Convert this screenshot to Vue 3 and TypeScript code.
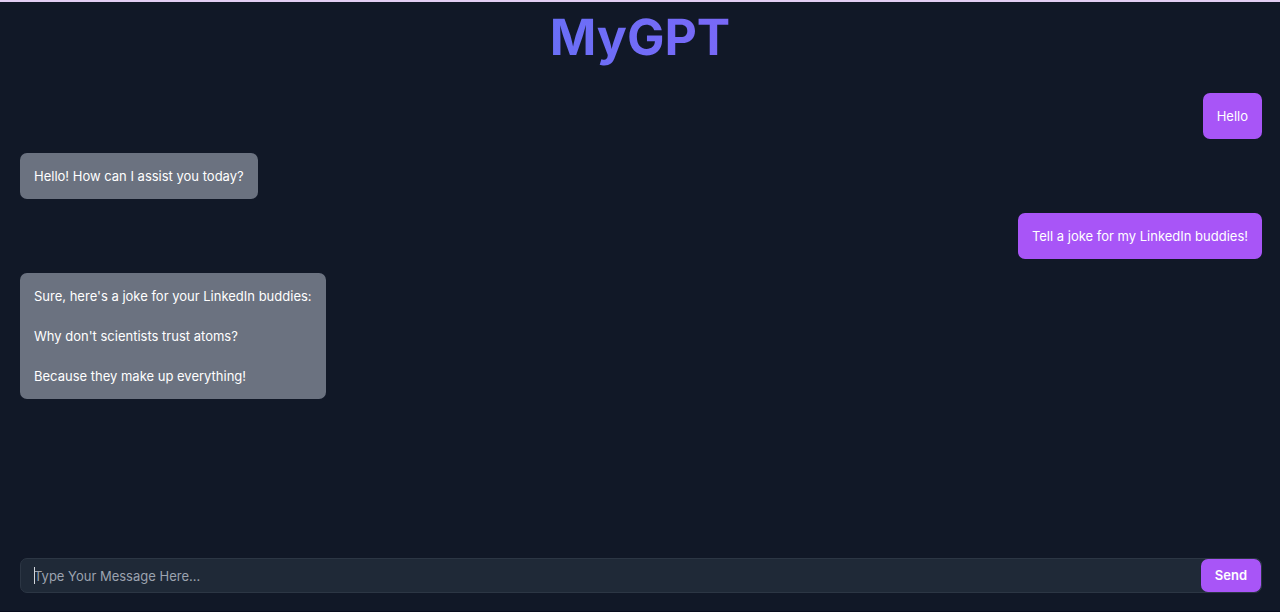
<script setup lang="ts">
import { ref } from 'vue'

interface Message {
  role: 'user' | 'assistant'
  content: string
}

const messages = ref<Message[]>([
  { role: 'user', content: 'Hello' },
  { role: 'assistant', content: 'Hello! How can I assist you today?' },
  { role: 'user', content: 'Tell a joke for my LinkedIn buddies!' },
  {
    role: 'assistant',
    content:
      "Sure, here's a joke for your LinkedIn buddies:\n\nWhy don't scientists trust atoms?\n\nBecause they make up everything!",
  },
])
const draft = ref('')

function send() {
  const content = draft.value.trim()
  if (!content) return
  messages.value.push({ role: 'user', content })
  draft.value = ''
}
</script>

<template>
  <main class="page">
    <h1 class="title">MyGPT</h1>
    <section class="messages" aria-label="Conversation">
      <div v-for="(m, i) in messages" :key="i" class="bubble" :class="m.role">{{ m.content }}</div>
    </section>
    <form class="composer" @submit.prevent="send">
      <div class="field">
        <input v-model="draft" class="input" type="text" aria-label="Message" placeholder="Type Your Message Here..." />
        <span v-if="!draft" class="caret" aria-hidden="true"></span>
      </div>
      <button class="send" type="submit">Send</button>
    </form>
  </main>
</template>

<style>
body {
  background: #111827;
}
</style>

<style scoped>
.page {
  box-sizing: border-box;
  display: flex;
  flex-direction: column;
  min-height: 100vh;
  border-top: 2px solid #e2cdf3;
  border-bottom: 1px solid #080c1c;
  background: #111827;
  color: #fff;
  font-family: Inter, "Liberation Sans", sans-serif;
  font-size: 13px;
  line-height: 20px;
}
.title {
  margin: 0;
  padding: 10px 0 15px;
  background: linear-gradient(to right, #3b82f6, #a855f7);
  -webkit-background-clip: text;
  background-clip: text;
  color: transparent;
  font-size: 50px;
  font-weight: 700;
  line-height: 52px;
  text-align: center;
  text-rendering: geometricPrecision;
}
.messages {
  flex: 1;
  display: flex;
  flex-direction: column;
  align-items: flex-start;
  gap: 14px;
  padding: 14px 18px 14px 20px;
}
.bubble {
  max-width: 60%;
  padding: 13px 14px;
  border-radius: 7px;
  white-space: pre-wrap;
}
.user {
  align-self: flex-end;
  background: #a855f7;
}
.assistant {
  background: #6b7280;
}
.composer {
  display: flex;
  margin: 0 18px 18px 20px;
  border: 1px solid #2c3644;
  border-radius: 7px;
  background: #1f2937;
}
.field {
  position: relative;
  flex: 1;
  display: flex;
}
.input {
  flex: 1;
  min-width: 0;
  padding: 0 13px;
  border: 0;
  outline: 0;
  background: transparent;
  color: #fff;
  font: inherit;
}
.input::placeholder {
  color: #9ca3af;
  opacity: 1;
}
.caret {
  position: absolute;
  top: 8px;
  left: 13px;
  width: 1px;
  height: 17px;
  background: #d1d5db;
}
.send {
  padding: 6px 14px;
  border: 0;
  border-radius: 7px;
  background: #a855f7;
  color: #fff;
  font: inherit;
  font-weight: 600;
  line-height: 21px;
}
</style>
